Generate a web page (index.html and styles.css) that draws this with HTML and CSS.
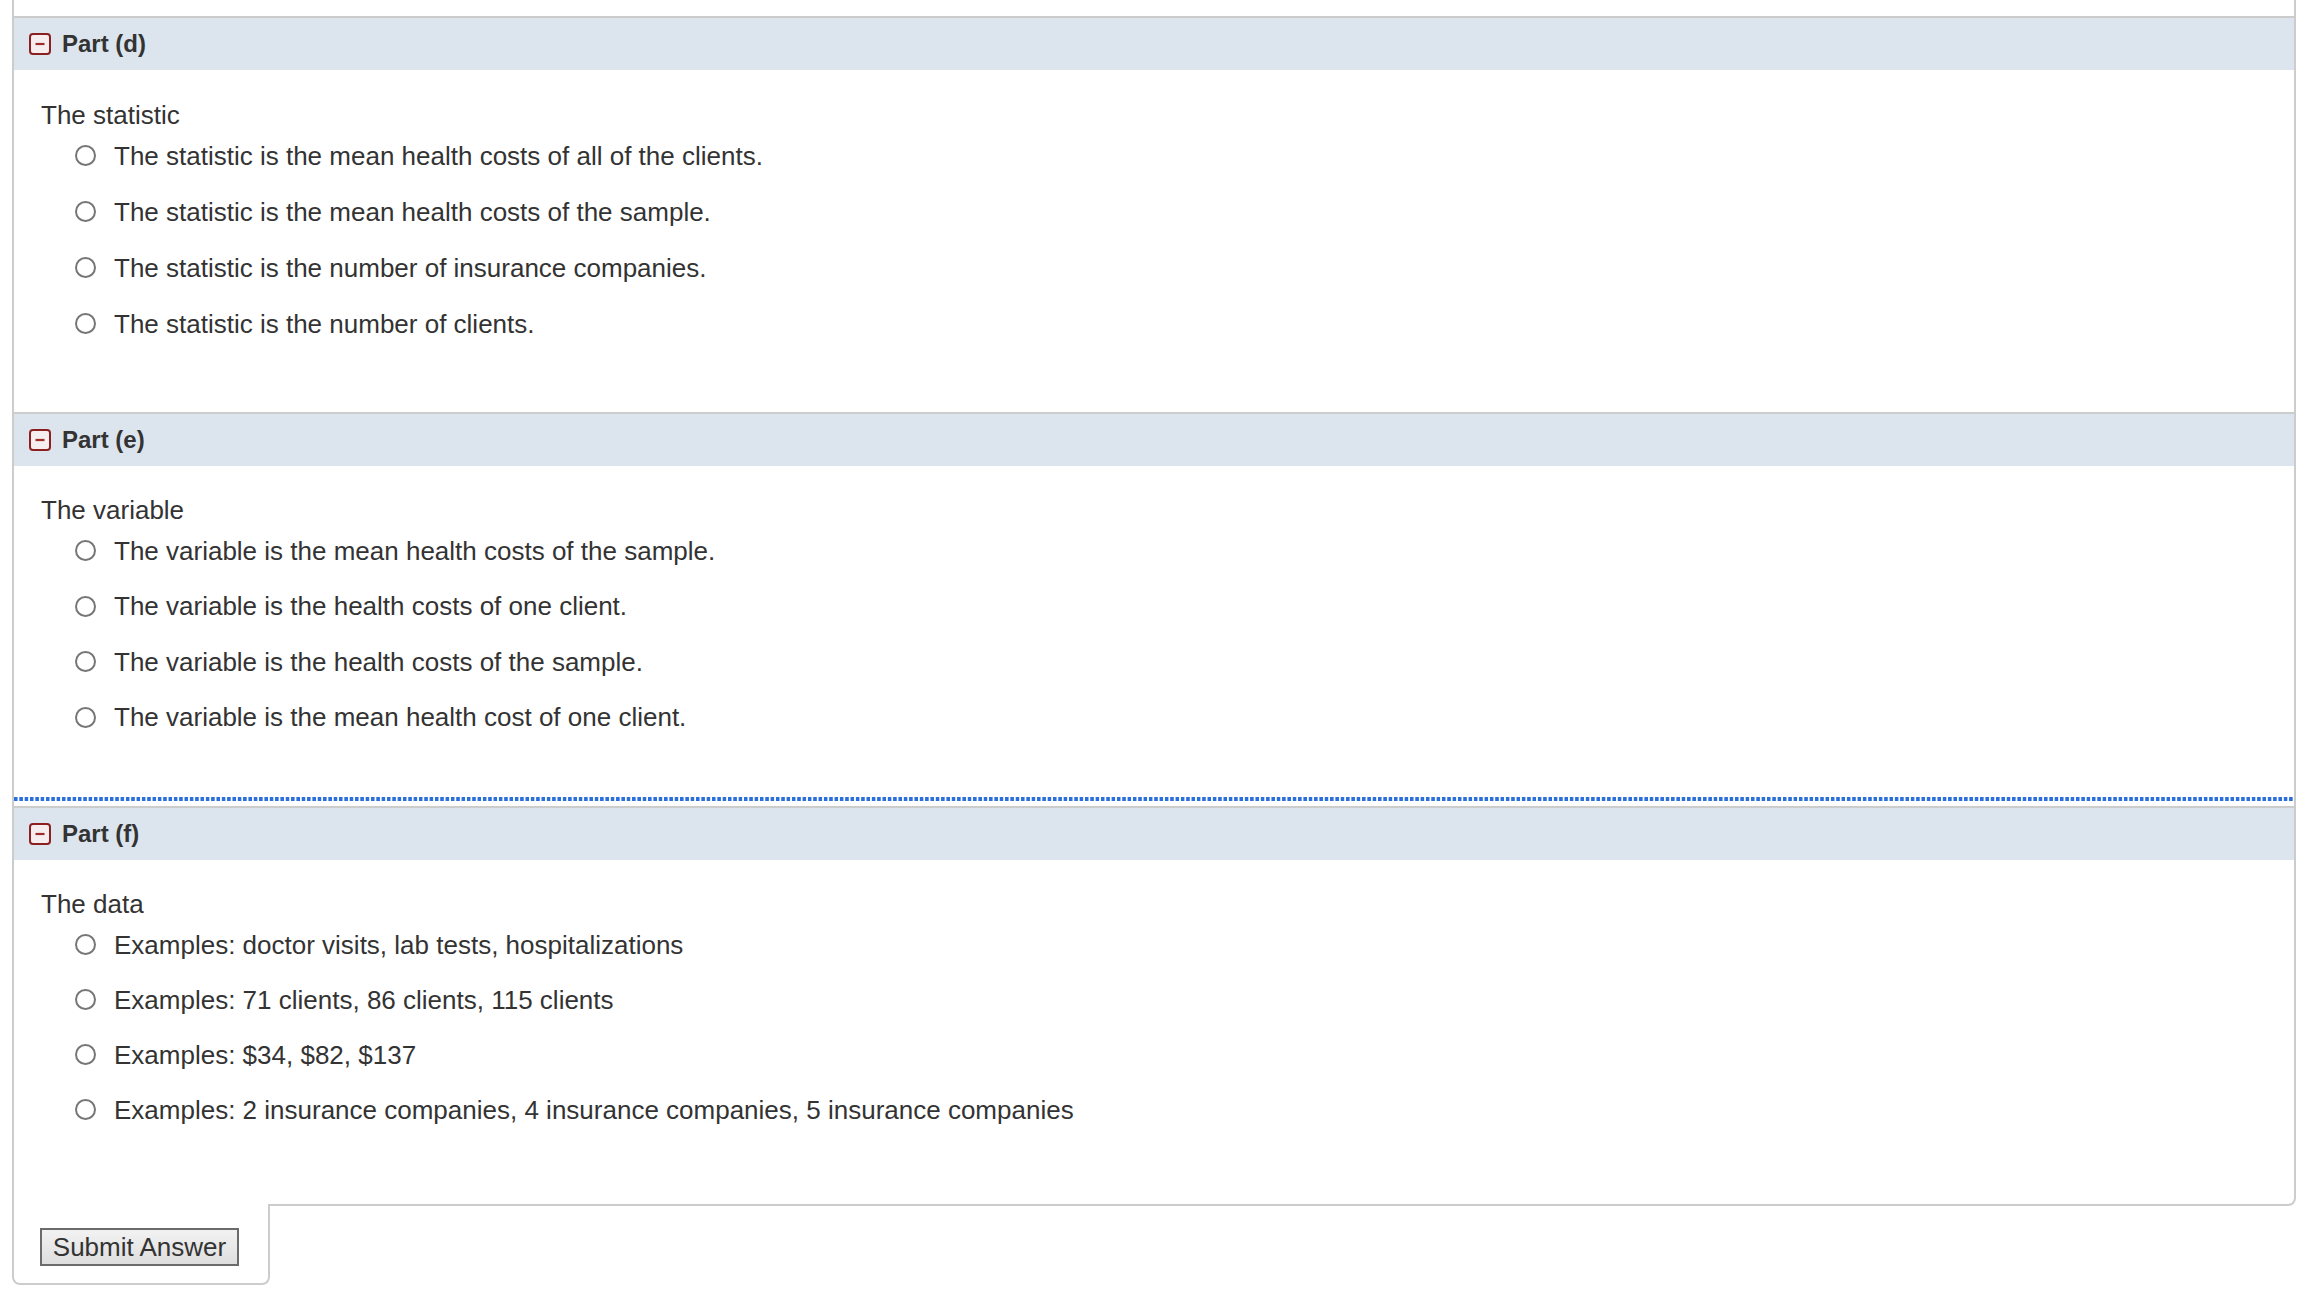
FILE: index.html
```html
<!DOCTYPE html>
<html>
<head>
<meta charset="utf-8">
<link rel="stylesheet" href="styles.css">
</head>
<body>
<div class="panel">
  <div class="top-space"></div>

  <section class="part">
    <div class="part-head">
      <svg class="toggle" width="22" height="22" viewBox="0 0 22 22"><rect x="1" y="1" width="20" height="20" rx="3" fill="#f6eeee" stroke="#8c2020" stroke-width="2"/><line x1="6.5" y1="11" x2="15.5" y2="11" stroke="#a02a2a" stroke-width="2.2"/></svg>
      <span class="part-title">Part (d)</span>
    </div>
    <div class="part-body body-d">
      <div class="prompt">The statistic</div>
      <label class="choice"><span class="radio"></span><span>The statistic is the mean health costs of all of the clients.</span></label>
      <label class="choice"><span class="radio"></span><span>The statistic is the mean health costs of the sample.</span></label>
      <label class="choice"><span class="radio"></span><span>The statistic is the number of insurance companies.</span></label>
      <label class="choice"><span class="radio"></span><span>The statistic is the number of clients.</span></label>
    </div>
  </section>

  <section class="part">
    <div class="part-head">
      <svg class="toggle" width="22" height="22" viewBox="0 0 22 22"><rect x="1" y="1" width="20" height="20" rx="3" fill="#f6eeee" stroke="#8c2020" stroke-width="2"/><line x1="6.5" y1="11" x2="15.5" y2="11" stroke="#a02a2a" stroke-width="2.2"/></svg>
      <span class="part-title">Part (e)</span>
    </div>
    <div class="part-body body-e">
      <div class="prompt">The variable</div>
      <label class="choice"><span class="radio"></span><span>The variable is the mean health costs of the sample.</span></label>
      <label class="choice"><span class="radio"></span><span>The variable is the health costs of one client.</span></label>
      <label class="choice"><span class="radio"></span><span>The variable is the health costs of the sample.</span></label>
      <label class="choice"><span class="radio"></span><span>The variable is the mean health cost of one client.</span></label>
    </div>
  </section>

  <div class="focus-line"></div>

  <section class="part">
    <div class="part-head">
      <svg class="toggle" width="22" height="22" viewBox="0 0 22 22"><rect x="1" y="1" width="20" height="20" rx="3" fill="#f6eeee" stroke="#8c2020" stroke-width="2"/><line x1="6.5" y1="11" x2="15.5" y2="11" stroke="#a02a2a" stroke-width="2.2"/></svg>
      <span class="part-title">Part (f)</span>
    </div>
    <div class="part-body body-f">
      <div class="prompt">The data</div>
      <label class="choice"><span class="radio"></span><span>Examples: doctor visits, lab tests, hospitalizations</span></label>
      <label class="choice"><span class="radio"></span><span>Examples: 71 clients, 86 clients, 115 clients</span></label>
      <label class="choice"><span class="radio"></span><span>Examples: $34, $82, $137</span></label>
      <label class="choice"><span class="radio"></span><span>Examples: 2 insurance companies, 4 insurance companies, 5 insurance companies</span></label>
    </div>
  </section>
</div>
<div class="submit-tab">
  <button class="submit-btn" type="button">Submit Answer</button>
</div>
</body>
</html>
```

FILE: styles.css
```css
html, body {
  margin: 0;
  padding: 0;
  background: #ffffff;
}

body {
  font-family: "Liberation Sans", Arial, Helvetica, sans-serif;
  color: #333333;
  padding: 0 14px 0 12px;
}

.panel {
  border-left: 2px solid #cccccc;
  border-right: 2px solid #cccccc;
  border-bottom: 2px solid #cccccc;
  border-bottom-right-radius: 8px;
}

.top-space {
  height: 16px;
}

.part {
  border-top: 2px solid #cccccc;
}

.part-head {
  height: 52px;
  background: #dce5ee;
  display: flex;
  align-items: center;
  padding-left: 15px;
  gap: 11px;
}

.toggle {
  display: block;
  flex: none;
}

.part-title {
  font-weight: bold;
  font-size: 24px;
  color: #333333;
}

.part-body {
  padding-left: 27px;
  font-size: 26px;
}

.body-d {
  padding-top: 31.5px;
  padding-bottom: 60.5px;
}

.body-e {
  padding-top: 31px;
  padding-bottom: 52px;
}

.body-f {
  padding-top: 31px;
  padding-bottom: 67px;
}

.prompt {
  line-height: 26px;
}

.choice {
  display: flex;
  align-items: center;
  height: 56px;
  padding-left: 34px;
  gap: 18px;
  line-height: 30px;
}

.body-e .choice {
  height: 55.5px;
}

.body-f .choice {
  height: 55px;
}

.radio {
  box-sizing: border-box;
  display: block;
  width: 21px;
  height: 21px;
  border: 2px solid #767676;
  border-radius: 50%;
  background: #ffffff;
  flex: none;
}

.focus-line {
  height: 4px;
  margin-bottom: 5px;
  background-image: linear-gradient(to right, #2a6fdb 0, #2a6fdb 3.5px, transparent 3.5px);
  background-size: 5.33px 4px;
  background-repeat: repeat-x;
}

.submit-tab {
  width: 228px;
  margin-top: -2px;
  padding: 24px 0 17px 26px;
  border-left: 2px solid #cccccc;
  border-right: 2px solid #cccccc;
  border-bottom: 2px solid #cccccc;
  border-bottom-left-radius: 8px;
  border-bottom-right-radius: 8px;
  background: #ffffff;
  position: relative;
}

.submit-btn {
  display: block;
  width: 199px;
  height: 38px;
  padding: 0;
  border: 2px solid #6b6b6b;
  border-radius: 0;
  background: linear-gradient(to bottom, #f2f2f2, #dedede);
  font-family: "Liberation Sans", Arial, Helvetica, sans-serif;
  font-size: 26px;
  color: #333333;
  line-height: 34px;
}
```
